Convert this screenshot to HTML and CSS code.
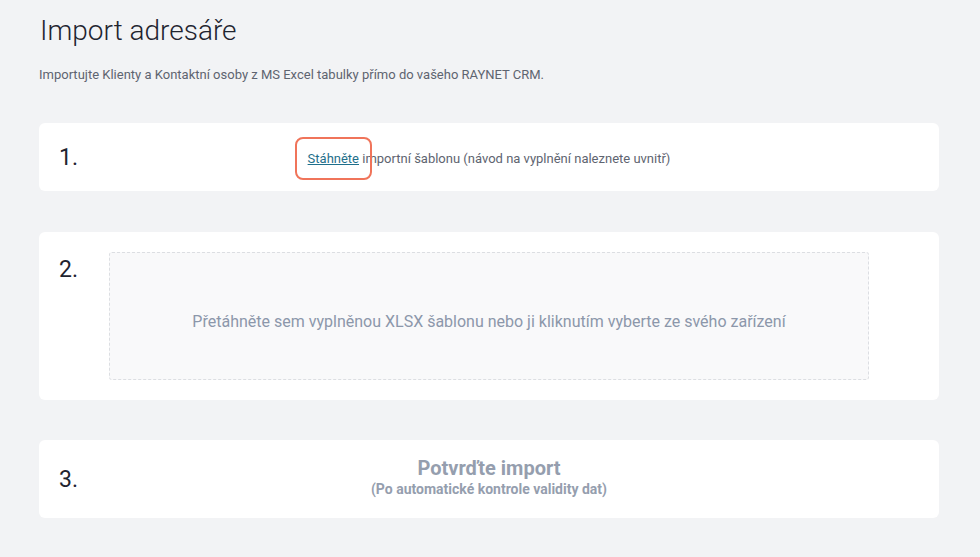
FILE: index.html
```html
<!DOCTYPE html>
<html lang="cs">
<head>
    <meta charset="UTF-8">
    <meta name="viewport" content="width=device-width, initial-scale=1.0">
    <title>Import adresáře</title>
    <link rel="stylesheet" href="styles.css">
</head>
<body>
    <div class="page">
        <h1>Import adresáře</h1>
        <p class="intro">Importujte Klienty a Kontaktní osoby z MS Excel tabulky přímo do vašeho RAYNET CRM.</p>

        <div class="step step-download">
            <div class="step-num">1.</div>
            <div class="step-body">
                <span class="hint"><a href="#" class="download">Stáhněte</a></span> importní šablonu (návod na vyplnění naleznete uvnitř)
            </div>
        </div>

        <div class="step step-upload">
            <div class="step-num">2.</div>
            <div class="dropzone">
                Přetáhněte sem vyplněnou XLSX šablonu nebo ji kliknutím vyberte ze svého zařízení
            </div>
        </div>

        <div class="step step-confirm">
            <div class="step-num">3.</div>
            <div class="step-body">
                <div class="confirm-title">Potvrďte import</div>
                <div class="confirm-sub">(Po automatické kontrole validity dat)</div>
            </div>
        </div>
    </div>
</body>
</html>
```

FILE: styles.css
```css
body {
    font-family: Roboto, "Liberation Sans", Arial, sans-serif;
    background-color: #f2f3f5;
    color: #333;
    margin: 0;
}
.page {
    width: 900px;
    padding: 14px 0 0 39px;
}
h1 {
    margin: 0 0 0 1px;
    font-size: 28px;
    font-weight: 300;
    color: #1f2430;
    line-height: 34px;
}
.intro {
    margin: 19px 0 0;
    font-size: 13px;
    color: #5e6470;
    line-height: 16px;
}
.step {
    position: relative;
    background-color: #fff;
    border-radius: 6px;
    display: flex;
    align-items: center;
    justify-content: center;
}
.step-num {
    position: absolute;
    left: 20px;
    font-size: 23px;
    color: #1f2430;
}
.step-download {
    margin-top: 40px;
    height: 68px;
}
.step-download .step-body {
    font-size: 13px;
    color: #5e6470;
    padding-top: 2px;
}
.hint {
    display: inline-block;
    position: relative;
}
.hint::after {
    content: "";
    position: absolute;
    left: -13px;
    right: -13px;
    top: -14px;
    bottom: -14px;
    border: 2px solid #f0745a;
    border-radius: 8px;
}
.download {
    color: #1f6f8b;
    text-decoration: underline;
}
.step-upload {
    margin-top: 41px;
    padding: 20px 0;
}
.step-upload .step-num {
    top: 24px;
}
.dropzone {
    box-sizing: border-box;
    width: 760px;
    height: 128px;
    padding-top: 10px;
    border: 1px dashed #dcdee2;
    border-radius: 3px;
    background-color: #f9f9fa;
    display: flex;
    align-items: center;
    justify-content: center;
    font-size: 16px;
    color: #8c97aa;
}
.step-confirm {
    margin-top: 40px;
    height: 78px;
}
.step-confirm .step-body {
    text-align: center;
    color: #959eae;
    font-weight: 700;
    padding-bottom: 4px;
}
.confirm-title {
    font-size: 20px;
    line-height: 24px;
}
.confirm-sub {
    font-size: 14px;
    line-height: 18px;
}
```
